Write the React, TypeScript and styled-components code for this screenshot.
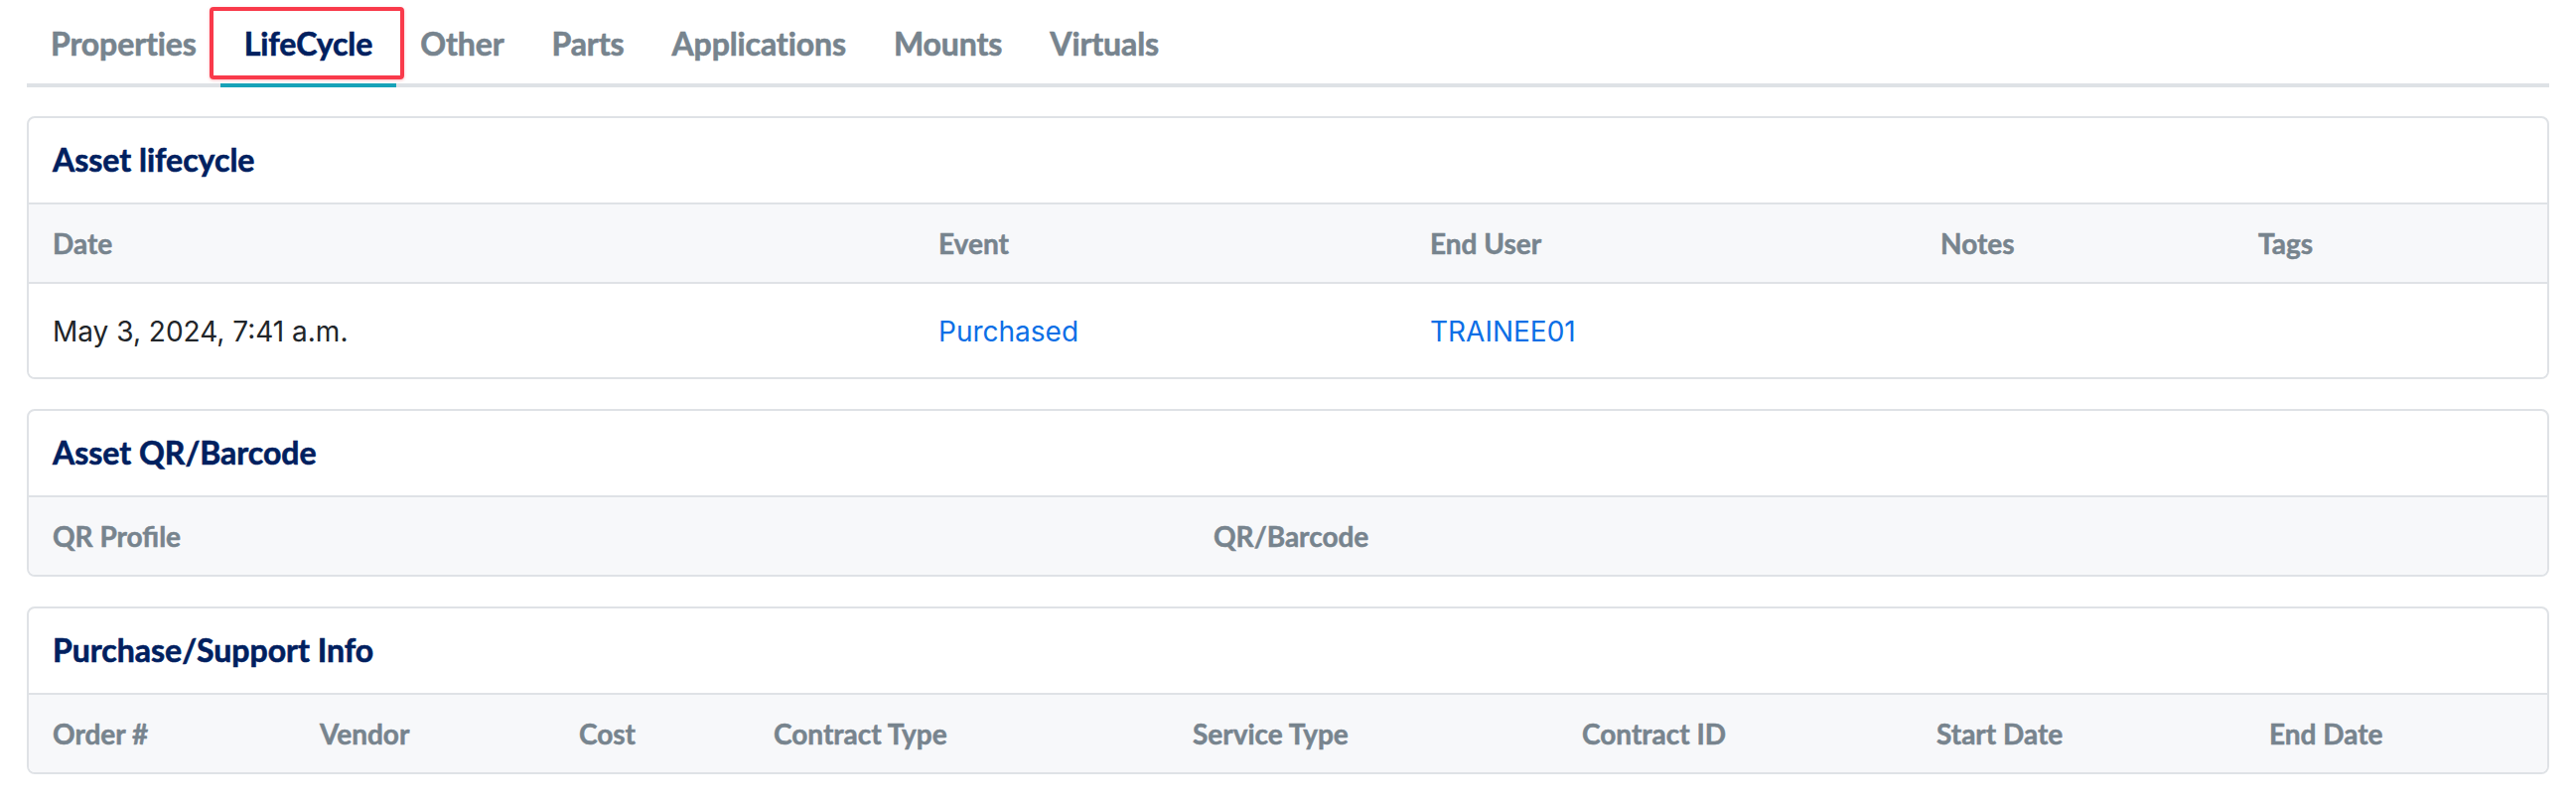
import React from "react"
import styled, { createGlobalStyle } from "styled-components"

const GlobalStyle = createGlobalStyle`
  body {
    margin: 0;
    background: #fff;
    font-family: Lato, "Noto Sans", sans-serif;
  }
`

const Page = styled.div`
  padding: 0 27px 28px;
`

const TabList = styled.div`
  display: flex;
  border-bottom: 4px solid #dee2e6;
`

interface TabProps {
  $active?: boolean
}

const Tab = styled.div<TabProps>`
  position: relative;
  padding: 20px 24px 16px;
  margin-bottom: -4px;
  font-size: 32px;
  line-height: 48px;
  font-weight: 700;
  letter-spacing: -0.1px;
  -webkit-text-stroke: 0.6px currentColor;
  color: ${(props) => (props.$active ? "#00205f" : "#77848e")};
  border-bottom: 4px solid ${(props) => (props.$active ? "#17a2b8" : "transparent")};
  cursor: pointer;
`

const Highlight = styled.span`
  position: absolute;
  top: 7px;
  left: -11px;
  right: -8px;
  bottom: 4px;
  border: 4px solid #f93a4b;
  border-radius: 4px;
  box-shadow: 0 1px 3px rgba(249, 58, 75, 0.35);
  pointer-events: none;
`

const Card = styled.section`
  margin-top: 29px;
  border: 2px solid #dfe2e6;
  border-radius: 8px;
  overflow: hidden;
  & + & {
    margin-top: 30px;
  }
`

const CardTitle = styled.h3`
  margin: 0;
  padding: 18px 24px 19px;
  font-size: 32px;
  line-height: 48px;
  font-weight: 700;
  -webkit-text-stroke: 0.6px currentColor;
  color: #00205f;
  border-bottom: 2px solid #dfe2e6;
`

interface RowProps {
  $cols: string
  $head?: boolean
}

const Row = styled.div<RowProps>`
  display: grid;
  grid-template-columns: ${(props) => props.$cols};
  background: ${(props) => (props.$head ? "#f7f8fa" : "#fff")};
  padding: ${(props) => (props.$head ? "18px 0" : "27px 0 25px")};
  & + & {
    border-top: 2px solid #dfe2e6;
  }
`

const HeadCell = styled.div`
  padding: 0 24px;
  font-size: 28px;
  line-height: 42px;
  font-weight: 700;
  -webkit-text-stroke: 0.5px currentColor;
  color: #77848e;
  white-space: nowrap;
`

interface CellProps {
  $link?: boolean
}

const Cell = styled.div<CellProps>`
  padding: 0 24px;
  font-family: Inter, "Noto Sans", sans-serif;
  font-size: 28px;
  line-height: 42px;
  color: ${(props) => (props.$link ? "#0b6fe6" : "#212529")};
  white-space: nowrap;
  cursor: ${(props) => (props.$link ? "pointer" : "auto")};
`

const tabs = ["Properties", "LifeCycle", "Other", "Parts", "Applications", "Mounts", "Virtuals"]

const lifecycleCols = "892px 495px 514px 320px 1fr"
const qrCols = "1169px 1fr"
const purchaseCols = "269px 261px 196px 422px 392px 357px 335px 1fr"

function HeadRow({ cols, labels }: { cols: string; labels: string[] }) {
  return (
    <Row $cols={cols} $head>
      {labels.map((l) => (
        <HeadCell key={l}>{l}</HeadCell>
      ))}
    </Row>
  )
}

export default function App() {
  return (
    <>
      <GlobalStyle />
      <Page>
        <TabList>
          {tabs.map((t) => (
            <Tab key={t} $active={t === "LifeCycle"}>
              {t}
              {t === "LifeCycle" && <Highlight />}
            </Tab>
          ))}
        </TabList>

        <Card>
          <CardTitle>Asset lifecycle</CardTitle>
          <HeadRow cols={lifecycleCols} labels={["Date", "Event", "End User", "Notes", "Tags"]} />
          <Row $cols={lifecycleCols}>
            <Cell>May 3, 2024, 7:41 a.m.</Cell>
            <Cell $link>Purchased</Cell>
            <Cell $link>TRAINEE01</Cell>
            <Cell />
            <Cell />
          </Row>
        </Card>

        <Card>
          <CardTitle>Asset QR/Barcode</CardTitle>
          <HeadRow cols={qrCols} labels={["QR Profile", "QR/Barcode"]} />
        </Card>

        <Card>
          <CardTitle>Purchase/Support Info</CardTitle>
          <HeadRow
            cols={purchaseCols}
            labels={["Order #", "Vendor", "Cost", "Contract Type", "Service Type", "Contract ID", "Start Date", "End Date"]}
          />
        </Card>
      </Page>
    </>
  )
}
